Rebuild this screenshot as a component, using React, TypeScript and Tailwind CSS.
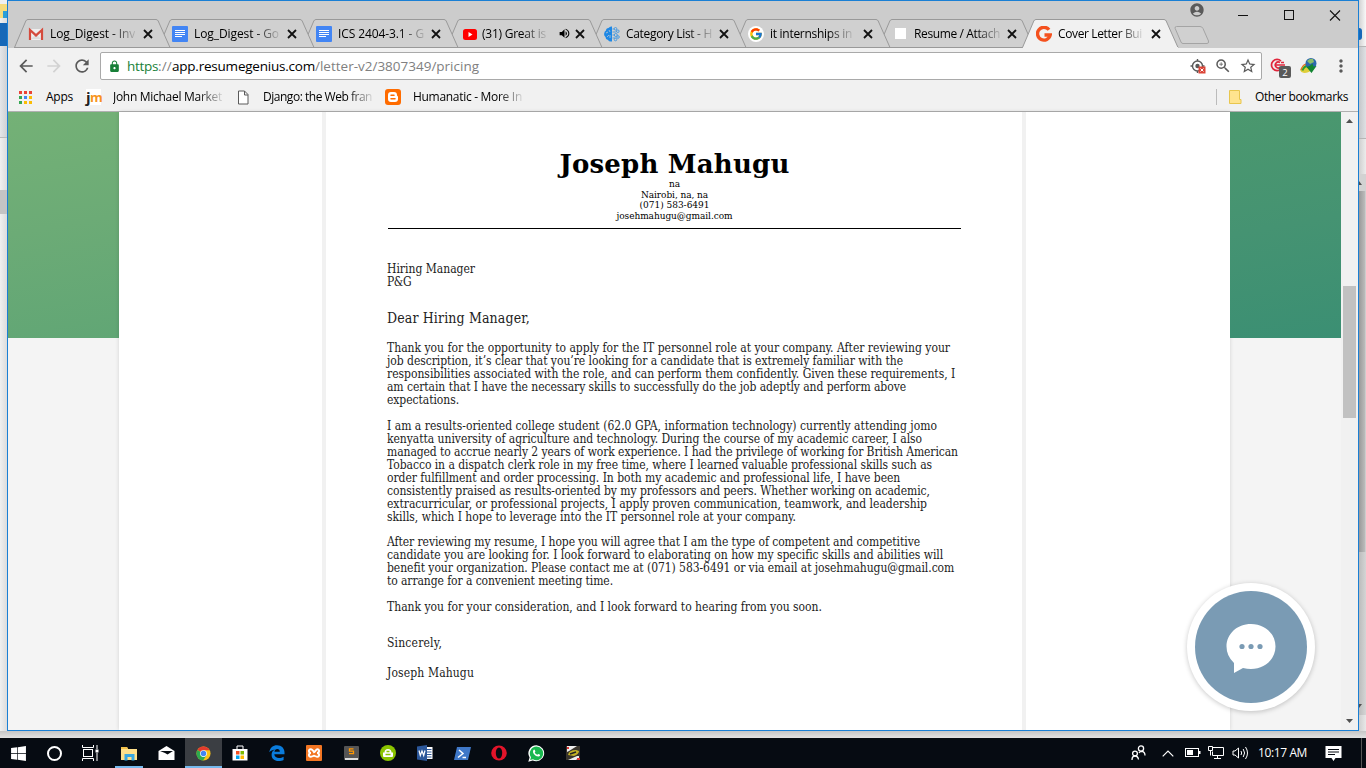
import { useLayoutEffect, useRef } from "react";
import type { ReactNode } from "react";
import {
  MdAccountCircle,
  MdArrowBack,
  MdArrowForward,
  MdLock,
  MdMoreVert,
  MdRefresh,
  MdStarBorder,
  MdVolumeUp,
  MdZoomIn,
} from "react-icons/md";
import { FaWindows } from "react-icons/fa";
import { FcGoogle } from "react-icons/fc";

/* One line of text whose letter spacing is computed so that it spans `w` pixels. */
function Fit({ w, className = "", children }: { w: number; className?: string; children: string }) {
  const ref = useRef<HTMLSpanElement>(null);
  useLayoutEffect(() => {
    const el = ref.current;
    if (!el) return;
    el.style.letterSpacing = "0px";
    const natural = el.getBoundingClientRect().width;
    el.style.letterSpacing = `${(w - natural) / children.length}px`;
  }, [w, children]);
  return (
    <span ref={ref} className={`inline-block shrink-0 whitespace-pre ${className}`}>
      {children}
    </span>
  );
}

const fade = "[mask-image:linear-gradient(to_right,black_calc(100%-24px),rgba(0,0,0,0.12))]";

function DocsIcon() {
  return (
    <svg width="16" height="16" viewBox="0 0 16 16">
      <rect width="16" height="16" rx="1" fill="#4285f4" />
      <path d="M3 4.5h10M3 6.5h10M3 8.5h10M3 10.5h7" stroke="#fff" />
    </svg>
  );
}

function GmailIcon() {
  return (
    <svg width="16" height="16" viewBox="0 0 16 16">
      <rect x="1" y="3" width="14" height="11" fill="#eee" />
      <path d="M3 13l5-5 5 5z" fill="#ddd" />
      <path d="M2 14V4l6 5.4L14 4v10" fill="none" stroke="#d54b3d" strokeWidth="2.2" />
    </svg>
  );
}

function YoutubeIcon() {
  return (
    <svg className="relative left-[2px]" width="16" height="16" viewBox="0 0 16 16">
      <rect x="1" y="3" width="14" height="11" rx="2.5" fill="#f00" />
      <path d="M6.5 6v5l4-2.5z" fill="#fff" />
    </svg>
  );
}

function CategoryIcon() {
  return (
    <svg width="16" height="16" viewBox="0 0 16 16">
      <path d="M8 .5v15Q5 16 4 14 1.500 13.500 1.500 11-.5 9.500.3 7 .5 5 2 4.500 2 2 4.500 2 6 0 8 .5z" fill="#1e88e5" />
      <path d="M2 7l2-1M3 11l2-2M5 4l1 2M6 12V9" stroke="#d0d0d0" strokeWidth=".7" />
      <g fill="none" stroke="#4a9be0" strokeWidth="1">
        <path d="M8.500 3h2M8.500 6h3l1.500-1M8.500 9h2M8.500 12h3" />
        <circle cx="11.500" cy="2.800" r="1.300" /><circle cx="13.800" cy="5.200" r="1.300" />
        <circle cx="11.800" cy="9" r="1.500" /><circle cx="14" cy="11" r="1.300" /><circle cx="11.500" cy="13.500" r="1.300" />
      </g>
    </svg>
  );
}

function GeniusIcon() {
  return (
    <svg width="16" height="16" viewBox="0 0 16 16">
      <path d="M13 3.8A6.4 6.4 0 1 0 14.2 9H8.5" fill="none" stroke="#f4511e" strokeWidth="3.4" />
    </svg>
  );
}

interface TabData {
  title: string;
  w: number;
  icon: ReactNode;
  z: string;
  active?: boolean;
  audio?: boolean;
}

const tabs: TabData[] = [
  { title: "Log_Digest - Inv", w: 85, icon: <GmailIcon />, z: "z-[8]" },
  { title: "Log_Digest - Go", w: 85, icon: <DocsIcon />, z: "z-[7]" },
  { title: "ICS 2404-3.1 - G", w: 86, icon: <DocsIcon />, z: "z-[6]" },
  { title: "(31) Great is", w: 64, icon: <YoutubeIcon />, z: "z-[5]", audio: true },
  { title: "Category List - H", w: 86, icon: <CategoryIcon />, z: "z-[4]" },
  {
    title: "it internships in",
    w: 82,
    icon: (
      <span className="flex size-4 items-center justify-center rounded-full bg-white">
        <FcGoogle size={14} />
      </span>
    ),
    z: "z-[3]",
  },
  { title: "Resume / Attach", w: 86, icon: <span className="size-[11px] bg-white" />, z: "z-[2]" },
  { title: "Cover Letter Bui", w: 84, icon: <GeniusIcon />, z: "z-[9]", active: true },
];

function Tab({ tab }: { tab: TabData }) {
  return (
    <div className={`relative h-[29px] w-[144px] shrink-0 ${tab.z}`}>
      <svg className="absolute left-0 top-0" width="158" height="29" viewBox="0 0 158 29">
        <path
          d="M.5 28.5L11.8 2Q12.5.5 14 .5H142Q143.500.5 144.200 2L156 28.500"
          fill={tab.active ? "#f1f1f1" : "#d0d0d0"}
          stroke="#999"
        />
        {tab.active ? (
          <path d="M1 28.500H156" stroke="#f1f1f1" />
        ) : (
          <path d="M0 28.500H157" stroke="#999" />
        )}
      </svg>
      <div className="relative flex h-[29px] items-center pl-[14px] text-[12px]">
        <span className="flex w-[16px] shrink-0 items-center justify-center">{tab.icon}</span>
        <span className={`ml-[6px] ${tab.audio ? "w-[71px]" : "w-[90px]"}`}>
          <Fit w={tab.w} className={fade}>
            {tab.title}
          </Fit>
        </span>
        {tab.audio && (
          <span className="w-[19px] pl-[5px]">
            <MdVolumeUp size={13} />
          </span>
        )}
        <svg className="ml-[3px] shrink-0" width="10" height="10" viewBox="0 0 10 10">
          <path d="M1 1l8 8M9 1l-8 8" stroke="#111" strokeWidth="1.800" />
        </svg>
      </div>
    </div>
  );
}

function TitleBar() {
  return (
    <div className="flex h-[47px] bg-[#ccc]">
      <div className="flex pl-[6px] pt-[18px]">
        {tabs.map((t) => (
          <Tab key={t.title} tab={t} />
        ))}
      </div>
      <div className="pl-[8px] pt-[25px]">
        <svg width="36" height="19" viewBox="0 0 36 19">
          <path d="M2.500.5H26Q28 .5 29 2.500L34.500 15Q35 17.500 33 17.500H9Q7.500 17.500 7 16L1.200 2.500Q.5.5 2.500.5z" fill="#d0d0d0" stroke="#a4a4a4" />
        </svg>
      </div>
      <div className="flex flex-1 text-[#111]">
        <MdAccountCircle size={16} className="ml-[-21px] mt-[1px] text-[#5a5a5a]" />
        <svg className="ml-[32px] mt-[8px]" width="110" height="14" viewBox="0 0 110 14">
          <path d="M1 6.500h10" stroke="#111" />
          <rect x="47.500" y="1.500" width="9" height="9" fill="none" stroke="#111" />
          <path d="M93 1.500l10 10M103 1.500l-10 10" stroke="#111" strokeWidth="1.100" />
        </svg>
      </div>
    </div>
  );
}

function Toolbar() {
  return (
    <div className="flex h-[35px] items-center bg-[#f1f1f1] pt-px">
      <MdArrowBack size={20} className="ml-[8px] text-[#5a5a5a]" />
      <MdArrowForward size={20} className="ml-[8px] text-[#d2d2d2]" />
      <MdRefresh size={20} className="ml-[8px] text-[#5a5a5a]" />
      <div className="ml-[8px] flex h-[28px] w-[1162px] items-center rounded-[2px] border border-[#a9a9a9] bg-white text-[13.5px]">
        <MdLock size={13} className="ml-[7px] text-[#188038]" />
        <span className="ml-[6px] flex">
          <Fit w={31} className="text-[#188038]">https</Fit>
          <Fit w={14} className="text-[#808080]">://</Fit>
          <Fit w={143} className="text-black">app.resumegenius.com</Fit>
          <Fit w={164} className="text-[#808080]">/letter-v2/3807349/pricing</Fit>
        </span>
        <span className="ml-auto flex items-center gap-[7px] pr-[4px] text-[#5a5a5a]">
          <svg className="mr-px" width="16" height="16" viewBox="0 0 16 16">
            <circle cx="7.500" cy="8" r="5" fill="none" stroke="#5a5a5a" strokeWidth="1.400" />
            <circle cx="7.500" cy="8" r="2.200" fill="#5a5a5a" />
            <path d="M7.500 1v2M.5 8h2M12.500 8h2M7.500 13v2" stroke="#5a5a5a" strokeWidth="1.400" />
            <rect x="8.500" y="8.500" width="7" height="7" fill="#db4437" />
            <path d="M10.500 10.500l3 3M13.500 10.500l-3 3" stroke="#fff" />
          </svg>
          <MdZoomIn size={18} />
          <MdStarBorder size={18} />
        </span>
      </div>
      <svg className="ml-[7px]" width="24" height="24" viewBox="0 0 24 24">
        <g fill="none" stroke="#e0263c" strokeWidth="1.700">
          <path d="M12 7A5.600 5.600 0 1 0 12 15" />
          <path d="M11 8.500A3 3 0 1 0 11 13.500" />
          <path d="M7 11h9M12 8.500h3" />
        </g>
        <rect x="10" y="12" width="12" height="12" rx="2" fill="#5a5a5a" />
        <text x="16" y="21.500" textAnchor="middle" fontSize="9.500" fill="#fff" fontFamily="Open Sans">2</text>
      </svg>
      <svg className="ml-[7px]" width="18" height="18" viewBox="0 0 18 18">
        <ellipse cx="7" cy="11.500" rx="6.800" ry="4" fill="#e0cf3a" transform="rotate(-20 7 12)" />
        <path d="M1 13q2-8 9-5" fill="none" stroke="#e66a2a" strokeWidth="1.200" />
        <path d="M2.500 13.500q2-6 8-4" fill="none" stroke="#2a9d2f" strokeWidth="1.800" />
        <circle cx="11" cy="6.500" r="5.500" fill="#2c68ad" />
        <path d="M7 4q3-3 6-2l1 3-4 2z" fill="#8cbf6a" />
        <path d="M6.500 10l5 6 5-7-3 .5-1-3-3 2.500z" fill="#128532" />
      </svg>
      <MdMoreVert size={20} className="ml-[13px] text-[#5a5a5a]" />
    </div>
  );
}

const dots = ["#ea4335", "#ea4335", "#ea4335", "#34a853", "#4285f4", "#fbbc05", "#34a853", "#fbbc05", "#fbbc05"];

function Bookmarks() {
  return (
    <div className="flex h-[29px] items-center border-b border-[#b0b0b0] bg-[#f1f1f1] text-[12px] text-black">
      <svg className="ml-[11px]" width="13" height="13" viewBox="0 0 13 13">
        {dots.map((c, i) => (
          <rect key={i} x={(i % 3) * 5} y={Math.floor(i / 3) * 5} width="3" height="3" fill={c} />
        ))}
      </svg>
      <span className="ml-[14px] w-[40px]"><Fit w={27}>Apps</Fit></span>
      <span className="flex h-[16px] w-[15px] items-center bg-white font-bold leading-[16px]">
        <span className="w-[4px] text-[15px] text-[#222]">j</span>
        <span className="w-[11px] text-[13px] text-[#f7941d]">m</span>
      </span>
      <span className="ml-[12px] w-[124px]"><Fit w={109} className={fade}>John Michael Market</Fit></span>
      <svg width="12" height="15" viewBox="0 0 12 15">
        <path d="M1.500 1h6L11 4.500V14H1.500zM7.500 1v4H11" fill="#fff" stroke="#5a5a5a" />
      </svg>
      <span className="ml-[14px] w-[122px]"><Fit w={109} className={fade}>Django: the Web fran</Fit></span>
      <svg width="16" height="16" viewBox="0 0 16 16">
        <rect width="16" height="16" rx="3" fill="#ff6c00" />
        <path d="M6 3h3q3 0 3 3 0 1 1 1.500V10q0 3-3 3H6q-3 0-3-3V6q0-3 3-3z" fill="#fff" />
        <path d="M6 6.300h3M6 9.700h4" stroke="#ff6c00" strokeWidth="1.500" strokeLinecap="round" />
      </svg>
      <span className="ml-[12px]"><Fit w={109} className={fade}>Humanatic - More In</Fit></span>
      <span className="ml-auto h-[16px] w-px bg-[#bbb]" />
      <svg className="ml-[12px]" width="13" height="14" viewBox="0 0 13 14">
        <path d="M.5.5h10v9h1.500v4H.5z" fill="#ffe48f" stroke="#e8c64e" />
      </svg>
      <span className="ml-[13px] mr-[10px]"><Fit w={93}>Other bookmarks</Fit></span>
    </div>
  );
}

type Line = [string, number];

const p1: Line[] = [
  ["Thank you for the opportunity to apply for the IT personnel role at your company. After reviewing your", 563],
  ["job description, it’s clear that you’re looking for a candidate that is extremely familiar with the", 516],
  ["responsibilities associated with the role, and can perform them confidently. Given these requirements, I", 568],
  ["am certain that I have the necessary skills to successfully do the job adeptly and perform above", 519],
  ["expectations.", 72],
];
const p2: Line[] = [
  ["I am a results-oriented college student (62.0 GPA, information technology) currently attending jomo", 550],
  ["kenyatta university of agriculture and technology. During the course of my academic career, I also", 535],
  ["managed to accrue nearly 2 years of work experience. I had the privilege of working for British American", 571],
  ["Tobacco in a dispatch clerk role in my free time, where I learned valuable professional skills such as", 545],
  ["order fulfillment and order processing. In both my academic and professional life, I have been", 513],
  ["consistently praised as results-oriented by my professors and peers. Whether working on academic,", 543],
  ["extracurricular, or professional projects, I apply proven communication, teamwork, and leadership", 540],
  ["skills, which I hope to leverage into the IT personnel role at your company.", 409],
];
const p3: Line[] = [
  ["After reviewing my resume, I hope you will agree that I am the type of competent and competitive", 533],
  ["candidate you are looking for. I look forward to elaborating on how my specific skills and abilities will", 556],
  ["benefit your organization. Please contact me at (071) 583-6491 or via email at josehmahugu@gmail.com", 567],
  ["to arrange for a convenient meeting time.", 226],
];

function Para({ lines, className }: { lines: Line[]; className: string }) {
  return (
    <div className={className}>
      {lines.map(([t, w]) => (
        <div key={t} className="h-[13px]">
          <Fit w={w}>{t}</Fit>
        </div>
      ))}
    </div>
  );
}

function Letter() {
  return (
    <div className="h-[618px] w-[704px] overflow-hidden border-x-[4px] border-[#f1f1f1] bg-white pl-[61px] font-['DejaVu_Serif_Condensed','DejaVu_Serif',serif] text-[12px] leading-[13px] text-[#222] [font-stretch:condensed]">
      <div className="flex w-[576px] flex-col items-center pt-[35px] text-[10px] leading-[10.5px] text-black">
        <Fit w={230} className="h-[32px] font-['DejaVu_Serif',serif] text-[26px] font-bold leading-[34px] [font-stretch:normal]">Joseph Mahugu</Fit>
        <Fit w={11}>na</Fit>
        <Fit w={67}>Nairobi, na, na</Fit>
        <Fit w={70}>(071) 583-6491</Fit>
        <Fit w={116}>josehmahugu@gmail.com</Fit>
      </div>
      <div className="ml-px mt-[7px] h-px w-[573px] bg-black" />
      <div className="pl-[0.5px]">
        <Para className="mt-[34px]" lines={[["Hiring Manager", 88], ["P&G", 24]]} />
        <div className="mt-[20px] h-[19px] text-[14px] leading-[18px]">
          <Fit w={143}>Dear Hiring Manager,</Fit>
        </div>
        <Para className="mt-[14px]" lines={p1} />
        <Para className="mt-[13px]" lines={p2} />
        <Para className="mt-[12px]" lines={p3} />
        <Para className="mt-[13px]" lines={[["Thank you for your consideration, and I look forward to hearing from you soon.", 435]]} />
        <Para className="mt-[23px]" lines={[["Sincerely,", 55]]} />
        <Para className="mt-[17px]" lines={[["Joseph Mahugu", 87]]} />
      </div>
    </div>
  );
}

function Content() {
  return (
    <div className="relative flex h-[618px] bg-[#f4f4f4]">
      <div className="h-[226px] w-[111px] bg-[linear-gradient(170deg,#74b176,#6cab76_50%,#61a675)]" />
      <div className="flex w-[1111px] justify-center bg-white pr-[2px] shadow-[0_0_4px_rgba(0,0,0,0.14)]">
        <Letter />
      </div>
      <div className="relative h-[226px] w-[111px] bg-[linear-gradient(170deg,#4b986e,#459372_50%,#3b8f73)]" />
      <div className="flex w-[17px] flex-col items-center bg-[#f1f1f1]">
        <svg className="mt-[7px]" width="7" height="4" viewBox="0 0 7 4"><path d="M0 4L3.500 0 7 4z" fill="#505050" /></svg>
        <div className="ml-[-1px] mt-[163px] h-[132px] w-[13px] bg-[#c1c1c1]" />
        <svg className="mb-[7px] mt-auto" width="7" height="4" viewBox="0 0 7 4"><path d="M0 0L3.500 4 7 0z" fill="#505050" /></svg>
      </div>
      <div className="absolute left-[1179px] top-[471px] flex size-[128px] items-center justify-center rounded-full bg-white shadow-[0_1px_5px_rgba(0,0,0,0.22)]">
        <div className="flex size-[112px] items-center justify-center rounded-full bg-[#7a9bb4]">
          <svg className="mt-[4px]" width="50" height="50" viewBox="0 0 50 50">
            <path d="M25 0C39 0 49.500 10 49.500 22.500S39 45 25 45q-4 0-8-1L8 49V39Q.5 32 .5 22.500C.5 10 11 0 25 0z" fill="#fff" />
            <g fill="#7a9bb4"><circle cx="16" cy="22.500" r="2.600" /><circle cx="25" cy="22.500" r="2.600" /><circle cx="34" cy="22.500" r="2.600" /></g>
          </svg>
        </div>
      </div>
    </div>
  );
}

function Slot({ children, on, open }: { children?: ReactNode; on?: boolean; open?: boolean }) {
  return (
    <div className={`flex h-[30px] w-[37px] flex-col items-center ${on ? "bg-[#3b3e43]" : ""}`}>
      <div className="flex h-[28px] items-center justify-center pt-[2px]">{children}</div>
      <div className={`h-[2px] ${on ? "w-full" : "w-[28px]"} ${on || open ? "bg-[#76b9ed]" : ""}`} />
    </div>
  );
}

function Taskbar() {
  return (
    <div className="flex h-[30px] bg-[#060b12] text-white">
      <div className="ml-[-0.5px] flex">
        <Slot><FaWindows size={17} /></Slot>
        <Slot><span className="mr-[2px] size-[15px] rounded-full border-2 border-white" /></Slot>
        <Slot>
          <svg className="mr-[3px]" width="17" height="16" viewBox="0 0 17 16" fill="none" stroke="#fff">
            <rect x="1.500" y="4.500" width="9" height="7" /><path d="M.5 0v2.500h11V0M.5 16v-2.500h11V16M15 0v4M15 8v8" /><path d="M13.500 6h3" strokeWidth="3" />
          </svg>
        </Slot>
        <Slot open>
          <svg width="17" height="15" viewBox="0 0 17 15">
            <path d="M0 1h6l1 2h9v11H0z" fill="#ffe08a" /><path d="M0 1h6l1 2H0z" fill="#f2c14b" /><path d="M3.500 14.500V8h10v6.500h-3V11h-4v3.500z" fill="#38a7e0" />
          </svg>
        </Slot>
        <Slot>
          <svg width="17" height="14" viewBox="0 0 17 14">
            <path d="M.5 5L8.500 0l8 5v9H.5z" fill="#fff" /><path d="M2 5h13L9.500 8.500 7 7z" fill="#060b12" />
          </svg>
        </Slot>
        <Slot on>
          <svg width="15" height="15" viewBox="0 0 16 16">
            <circle cx="8" cy="8" r="7.500" fill="#fbc116" />
            <path d="M8 8L1.500 4.200A7.500 7.500 0 0 1 14.500 4.500H8z" fill="#e33b2e" />
            <path d="M8 8L1.500 4.200A7.500 7.500 0 0 0 7.500 15.500L11 10z" fill="#2da94f" />
            <circle cx="8" cy="8" r="3.600" fill="#fff" /><circle cx="8" cy="8" r="2.900" fill="#4285f4" />
          </svg>
        </Slot>
        <Slot>
          <svg width="16" height="16" viewBox="0 0 16 16">
            <path d="M5 4V1h6v3" fill="none" stroke="#fff" /><path d="M.5 4h15v11.500H.5z" fill="#fff" />
            <path d="M4 6h3.500v3.500H4z" fill="#f25022" /><path d="M8.500 6H12v3.500H8.500z" fill="#7fba00" /><path d="M4 10.500h3.500V14H4z" fill="#00a4ef" /><path d="M8.500 10.500H12V14H8.500z" fill="#ffb900" />
          </svg>
        </Slot>
        <Slot>
          <svg width="16" height="16" viewBox="0 0 16 16">
            <path d="M.3 7.200C1 2.800 4 .2 8 .2c4.600 0 7.500 3.200 7.500 7.400v1.700H5.300c.2 2.600 2.300 3.700 4.700 3.700 1.800 0 3.300-.5 4.600-1.300v3.200c-1.400.7-3 1.100-5 1.100-4.300 0-7-2.400-7-6.300 0-2.400 1.200-4.200 3.200-5.200C3.400 4.900 1.500 5.700.3 7.200zM5.500 6.700h5.300c0-1.700-.8-2.700-2.500-2.700-1.600 0-2.600 1.100-2.800 2.700z" fill="#0a7cdc" />
          </svg>
        </Slot>
        <Slot>
          <svg width="16" height="16" viewBox="0 0 16 16">
            <rect width="16" height="16" rx="1" fill="#f37623" />
            <path d="M8 7.200c-1-2-2-3-3.300-3C2 4.200 2.500 8 5 8c-2.500 0-3 3.800-.3 3.800 1.300 0 2.300-1 3.300-1s2 1 3.300 1C14 11.800 13.500 8 11 8c2.500 0 3-3.800.3-3.800C10 4.200 9 7.200 8 7.200z" fill="none" stroke="#fff" strokeWidth="1.900" />
          </svg>
        </Slot>
        <Slot>
          <svg width="15" height="14" viewBox="0 0 15 14">
            <rect width="15" height="14" rx="1" fill="#555" /><path d="M1 12h13v2H1z" fill="#ddd" />
            <path d="M9.500 2.800H5.500v2.400h4v2.500h-4.500" fill="none" stroke="#ff9800" strokeWidth="1.300" />
          </svg>
        </Slot>
        <Slot>
          <svg width="16" height="16" viewBox="0 0 16 16">
            <circle cx="8" cy="8" r="8" fill="#8bc400" /><path d="M3 11V7.500h1.500a3.500 3.500 0 0 1 7 0H13V11q0 1-1 1H4q-1 0-1-1z" fill="#fff" />
            <path d="M6.500 6.500h3M5.500 9.500h5" stroke="#8bc400" strokeWidth="1.300" />
          </svg>
        </Slot>
        <Slot>
          <svg width="16" height="16" viewBox="0 0 16 16">
            <path d="M9 2h6.500v12H9z" fill="#fff" /><path d="M10 4.500h4.500M10 7h4.500M10 9.500h4.500M10 12h4.500" stroke="#2b579a" />
            <path d="M0 1.500L10 0v16L0 14.500z" fill="#2b579a" /><path d="M2 5.500l1.300 5L5 6l1.700 4.500L8 5.500" fill="none" stroke="#fff" strokeWidth="1.200" />
          </svg>
        </Slot>
        <Slot>
          <svg width="17" height="13" viewBox="0 0 17 13">
            <path d="M3 0h14l-3 13H0z" fill="#3f78c8" /><path d="M5 3l4 3.500-5 4M8.500 10.500H12" fill="none" stroke="#fff" strokeWidth="1.500" />
          </svg>
        </Slot>
        <Slot>
          <svg width="16" height="16" viewBox="0 0 16 16">
            <ellipse cx="8" cy="8" rx="7.800" ry="7.500" fill="#e3142a" /><ellipse cx="8" cy="8" rx="3.200" ry="5.600" fill="#060b12" />
          </svg>
        </Slot>
        <Slot>
          <svg width="17" height="17" viewBox="0 0 17 17">
            <path d="M8.500.3a8 8 0 1 1-3.800 15.200L.3 16.700l1.300-4.200A8 8 0 0 1 8.500.3z" fill="#fff" />
            <path d="M8.500 1.600a6.800 6.800 0 1 1-3.500 12.700l-2.900.8.900-2.900A6.800 6.800 0 0 1 8.500 1.600z" fill="#19b84f" />
            <path d="M5.300 5.200q.8-1.200 1.500-.3l.6 1.500-.7 1q.8 1.700 2.700 2.400l.9-.9 1.800.9q.2 1.500-1.500 1.800-2.600.2-4.800-2.600-1.500-2-.5-3.800z" fill="#fff" />
          </svg>
        </Slot>
        <Slot>
          <svg width="14" height="14" viewBox="0 0 14 14">
            <rect width="14" height="14" fill="#38342c" /><path d="M1 0h10L3 5 1 6zM2 14l9-4h2v2l-3 2z" fill="#eee" />
            <path d="M2 9q1-5 8-5l3 1q0 3-5 5z" fill="#c3b125" /><path d="M4 8l6-2" stroke="#222" strokeWidth="1.500" /><path d="M11 12h3v2h-3zM1 1h2v2H1z" fill="#d33" />
          </svg>
        </Slot>
      </div>
      <div className="ml-auto flex items-center text-[12px]">
        <svg width="15" height="16" viewBox="0 0 15 16" fill="none" stroke="#fff" strokeWidth="1.300">
          <circle cx="10" cy="3.500" r="2.600" /><circle cx="4" cy="8.500" r="2.400" /><path d="M1 15q0-4 3-4t3.500 3.500M8 8q1-1.600 2.500-1.600Q14 6.500 14 10.500" />
        </svg>
        <svg className="ml-[16px]" width="12" height="7" viewBox="0 0 12 7"><path d="M.7 6.300L6 1l5.300 5.300" fill="none" stroke="#fff" strokeWidth="1.200" /></svg>
        <svg className="ml-[11px]" width="16" height="10" viewBox="0 0 16 10"><rect x=".5" y=".5" width="13" height="8" fill="none" stroke="#fff" /><path d="M2 2h6v5H2zM14 3h1.500v3H14z" fill="#fff" /></svg>
        <svg className="ml-[7px]" width="17" height="14" viewBox="0 0 17 14" fill="none" stroke="#fff">
          <path d="M5 1.500h10.500v8H4.500V5.500M9.500 9.500v3M6 12.500h7M.5.500h4v4h-4zM2.500 4.500v5" />
        </svg>
        <svg className="ml-[7px]" width="17" height="14" viewBox="0 0 17 14" fill="none" stroke="#fff">
          <path d="M1 5v4h2l3.500 3V2L3 5zM9 5q1.300 2 0 4M11.200 3q2.800 4 0 8M13.500 1q4 6 0 12" />
        </svg>
        <span className="ml-[9px] w-[67px]"><Fit w={49}>10:17 AM</Fit></span>
        <svg width="17" height="17" viewBox="0 0 17 17">
          <path d="M.5 1h16v12h-6L8.500 16l-2-3h-6z" fill="#fff" /><path d="M3 4.500h11M3 7h11M3 9.500h7" stroke="#060b12" />
        </svg>
        <span className="ml-[19px] mr-[4px] h-[30px] w-px bg-[#555]" />
      </div>
    </div>
  );
}

function LeftStrip() {
  return (
    <div className="flex w-[7px] flex-col bg-[linear-gradient(to_right,#f0f0f0,#dcdcdc)]">
      <div className="h-[4px] bg-[#f0f0f0]" />
      <div className="flex h-[14px] flex-col items-end bg-[#f7dc7c]">
        <span className="mt-[7px] h-[7px] w-[4px] bg-[#2b9fd8]" />
      </div>
      <div className="h-[5px]" />
      <div className="h-[23px] bg-[#1668b8]" />
      <div className="h-[92px] border-b border-[#bbb] bg-[linear-gradient(to_right,#e4e6e9,#cfd1d4)]" />
      <div className="h-[52px]" />
      <div className="h-[24px] bg-[#c4c4c4]" />
    </div>
  );
}

function RightStrip() {
  return (
    <div className="flex w-[7px] flex-col bg-[linear-gradient(to_right,#cfcfcf,#e8e8e8)]">
      <div className="flex h-[46px] items-center bg-[linear-gradient(to_right,#d2d2d2,#f8f8f8)] pt-[22px]">
        <span className="h-[12px] w-[3px] rounded-r-full bg-[#1668b8]" />
      </div>
      <div className="h-[93px] border-y border-[#b5b5b5] bg-[linear-gradient(to_right,#c4c6c9,#dfe1e4)]" />
      <div className="h-[35px] bg-[linear-gradient(to_right,#cfcfcf,#ececec)]" />
      <div className="flex h-[17px] items-center bg-[#d2d2d2]">
        <svg width="3" height="4" viewBox="0 0 3 4"><path d="M0 0l3 4H0z" fill="#505050" /></svg>
      </div>
      <div className="h-[361px] bg-[linear-gradient(to_right,#999,#b9b9b9_80%,#d8d8d8)]" />
      <div className="flex h-[163px] items-end bg-[linear-gradient(to_right,#bcbcbc,#d5d5d5)] pb-[7px]">
        <svg width="3" height="4" viewBox="0 0 3 4"><path d="M0 0h3L0 4z" fill="#505050" /></svg>
      </div>
    </div>
  );
}

export default function App() {
  return (
    <div className="h-[768px] w-[1366px] overflow-hidden font-['Open_Sans','Noto_Sans',sans-serif] text-black">
      <div className="flex h-[731px]">
        <LeftStrip />
        <div className="w-[1352px] overflow-hidden border border-[#1a7fd4]">
          <TitleBar />
          <Toolbar />
          <Bookmarks />
          <Content />
        </div>
        <RightStrip />
      </div>
      <div className="h-[7px] bg-[linear-gradient(#c6c6c6,#e2e2e2)]" />
      <Taskbar />
    </div>
  );
}
